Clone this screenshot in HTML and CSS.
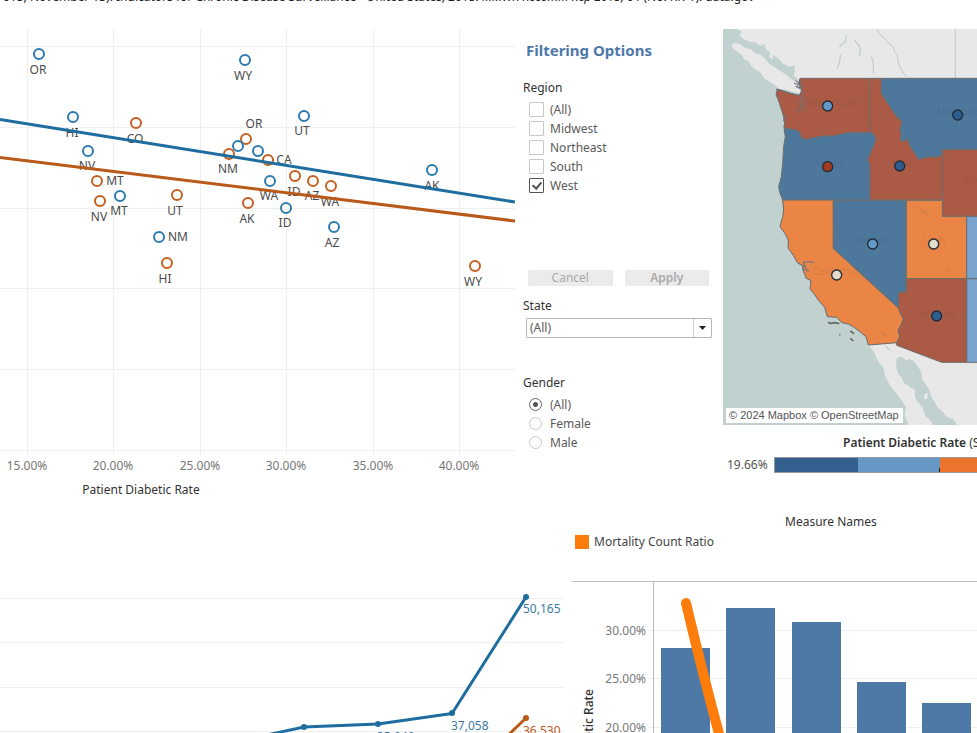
FILE: index.html
```html
<!DOCTYPE html>
<html lang="en">
<head>
<meta charset="utf-8">
<title>Chronic Disease Indicators</title>
<link rel="stylesheet" href="styles.css">
</head>
<body>
<header class="source"><p>015, November 13). Indicators for Chronic Disease Surveillance - United States, 2015. <em>MMWR Recomm Rep 2015; 64</em> (No. RR-1). data.gov</p></header>
<main>
<div class="row row-top">
  <section class="panel">
    <svg class="chart" viewBox="0 29 515 476" role="img" aria-label="Rates by state">
      <path class="grid" d="M27.5 29V455M113.500 29V455M200.500 29V455M286.500 29V455M373.500 29V455M459.500 29V455M0 46.500H515M0 127.500H515M0 208.500H515M0 288.500H515M0 369.500H515M0 450.500H515"/>
      <g class="state-label">
        <text x="38" y="74">OR</text><text x="243" y="80">WY</text><text x="72" y="137">HI</text><text x="135" y="143">CO</text>
        <text x="87" y="170">NV</text><text x="115" y="185">MT</text><text x="99" y="221">NV</text><text x="119" y="215">MT</text>
        <text x="175" y="215">UT</text><text x="178" y="241">NM</text><text x="165" y="283">HI</text><text x="254" y="128">OR</text>
        <text x="228" y="173">NM</text><text x="302" y="135">UT</text><text x="284" y="164">CA</text><text x="269" y="200">WA</text>
        <text x="294" y="196">ID</text><text x="312" y="200">AZ</text><text x="330" y="206">WA</text><text x="247" y="223">AK</text>
        <text x="285" y="227">ID</text><text x="332" y="247">AZ</text><text x="432" y="190">AK</text><text x="473" y="286">WY</text>
      </g>
      <g class="mark mark-orange">
        <circle cx="136" cy="123" r="5"/><circle cx="97" cy="181" r="5"/><circle cx="100" cy="201" r="5"/><circle cx="177" cy="195" r="5"/>
        <circle cx="167" cy="263" r="5"/><circle cx="229" cy="154" r="5"/><circle cx="246" cy="139" r="5"/><circle cx="268" cy="160" r="5"/>
        <circle cx="295" cy="176" r="5"/><circle cx="313" cy="181" r="5"/><circle cx="331" cy="186" r="5"/><circle cx="248" cy="203" r="5"/><circle cx="475" cy="266" r="5"/>
      </g>
      <g class="mark mark-blue">
        <circle cx="39" cy="54" r="5"/><circle cx="245" cy="60" r="5"/><circle cx="73" cy="117" r="5"/><circle cx="88" cy="151" r="5"/>
        <circle cx="120" cy="196" r="5"/><circle cx="159" cy="237" r="5"/><circle cx="238" cy="146" r="5"/><circle cx="258" cy="151" r="5"/>
        <circle cx="304" cy="116" r="5"/><circle cx="270" cy="181" r="5"/><circle cx="286" cy="208" r="5"/><circle cx="334" cy="227" r="5"/><circle cx="432" cy="170" r="5"/>
      </g>
      <path class="trend orange" d="M0 157.500L515 221"/>
      <path class="trend blue" d="M0 119.500L515 202"/>
      <g class="tick middle">
        <text x="27" y="470">15.00%</text><text x="113" y="470">20.00%</text><text x="200" y="470">25.00%</text>
        <text x="286" y="470">30.00%</text><text x="373" y="470">35.00%</text><text x="459" y="470">40.00%</text>
      </g>
      <text class="axis-title middle" x="141" y="494">Patient Diabetic Rate</text>
    </svg>
  </section>

  <form class="filters">
    <h2>Filtering Options</h2>
    <fieldset>
      <legend>Region</legend>
      <label><input type="checkbox">(All)</label>
      <label><input type="checkbox">Midwest</label>
      <label><input type="checkbox">Northeast</label>
      <label><input type="checkbox">South</label>
      <label><input type="checkbox" checked>West</label>
    </fieldset>
    <div class="actions">
      <button type="button" disabled>Cancel</button>
      <button type="button" class="strong" disabled>Apply</button>
    </div>
    <label class="field-label" for="state">State</label>
    <div class="select">
      <select id="state"><option>(All)</option></select>
      <svg viewBox="0 0 18 18" aria-hidden="true"><path class="divider" d="M.5 0V18"/><path d="M6 7H13L9.500 11Z"/></svg>
    </div>
    <fieldset class="gender">
      <legend>Gender</legend>
      <label><input type="radio" name="gender" checked>(All)</label>
      <label><input type="radio" name="gender">Female</label>
      <label><input type="radio" name="gender">Male</label>
    </fieldset>
  </form>

  <section class="panel">
    <div class="map">
      <svg viewBox="9 87 762 1188" preserveAspectRatio="xMinYMin slice" role="img" aria-label="Map of western states">
        <path class="sea" d="M9 87H771V1275H9Z"/>
        <path class="land" d="M52 87L66 96 58 106 72 118 92 126 108 128 122 138 134 132 138 150 150 156 148 172 164 180 178 192 186 206 200 214 214 204 226 212 220 226 232 236 246 262 771 300V87Z"/>
        <path class="land" d="M36 134L46 128 62 134 76 144 92 148 104 158 122 164 136 176 148 192 164 202 182 214 196 222 210 234 224 244 238 256 242 280 222 276 200 270 178 266 160 252 146 244 132 234 120 216 104 208 92 196 84 182 72 178 66 164 52 156 38 144Z"/>
        <path class="sea" d="M158 166L176 176 190 192 210 200 222 196 224 208 206 218 190 212 176 198 160 186Z"/>
        <path class="land" d="M445 1035L530 1028 665 1080H771V1275H712L700 1258 680 1250 668 1236 652 1222 645 1206 634 1190 628 1170 618 1154 606 1138 604 1116 594 1100 580 1082 566 1076 560 1082 544 1070 530 1074 528 1100 534 1122 546 1134 552 1150 570 1160 582 1180 590 1202 608 1222 616 1248 632 1262 640 1275H566L554 1246 558 1222 544 1200 526 1176 510 1158 496 1128 490 1104 474 1084 462 1056Z"/>
        <path class="land" d="M574 1162L586 1170 584 1184 574 1176ZM614 1182L624 1180 622 1198 612 1196Z"/>
        <path class="lake" d="M380 106L376 124 364 134 358 140M404 120L418 138 422 150 418 170M362 164L358 186 352 206M454 168L460 190 460 220M496 1036L510 1052"/>
        <path class="canada" d="M470 88L480 104 494 116 504 130 520 140 524 156 532 164 534 186 542 206 558 230M706 87V234"/>

        <path class="red" d="M240 235H449L450 384 456 397 385 398 340 408 312 408 285 412 255 419 242 410 240 398 228 390 210 386 192 384 194 362 188 340 180 316 175 300 168 284 172 268 190 274 210 280 238 286 246 270 236 250Z"/>
        <path class="blue-fill" d="M192 386L210 387 228 390 240 398 242 410 255 419 285 412 312 408 340 408 385 398 456 397 468 416 460 440 452 460 443 480 450 494V600H188L180 580 176 560 184 530 188 490 191 440 196 410Z"/>
        <path class="red" d="M449 235H484V280L500 305 520 335 530 350 546 364 540 390 544 402 540 420 550 424 562 416 570 438 582 456 596 478 610 474 630 470 650 472 667 464V600H450V494L443 480 452 460 460 440 468 416 456 397 450 384Z"/>
        <path class="blue-fill" d="M484 235H790V449H667V464L650 472 630 470 610 474 596 478 582 456 570 438 562 416 550 424 540 420 544 402 540 390 546 364 530 350 520 335 500 305 484 280Z"/>
        <path class="red" d="M667 449H790V649H667Z"/>
        <path class="orange-fill" d="M188 600H340V745L536 925 542 942 550 956 544 974 534 992 540 1008 532 1028 445 1035 438 1010 420 995 402 982 385 972 366 968 350 952 322 950 314 922 296 902 284 884 270 866 273 842 258 834 250 812 246 796 232 788 220 766 204 744 205 720 196 702 180 680 188 650 191 630Z"/>
        <path class="blue-fill" d="M340 601H559V876H540L535 884 537 925 340 745Z"/>
        <path class="orange-fill" d="M559 601H667V649H740V836H559Z"/>
        <path class="light-fill" d="M740 649H790V836H740ZM740 836H790V1087H740Z"/>
        <path class="red" d="M559 836H740V1087H665L530 1036V1028L540 1008 534 992 544 974 550 956 542 942 536 925 535 884 540 876H559Z"/>

        <path class="coast" d="M168 267L190 272 212 280 234 286M222 250L240 254 238 266 226 258M242 240L248 258 242 268 250 278 246 292 256 302 248 312 254 326 244 334M226 242L238 248 230 260 244 264M238 286L246 296 238 306 246 318 234 334M190 344L197 350 190 360 196 372M194 386L212 384"/>
        <path class="coast" d="M248 788L264 785 284 788M252 784L254 800 262 814M248 796L260 800M258 806L268 816M234 788L248 798 250 812 258 806"/>
        <path class="island" d="M324 968L334 970 344 968 358 971M358 1003L361 1005M391 993L402 1001M391 1015L400 1023"/>
        <path class="terrain" d="M588 614L604 626 618 630 634 654 620 650 602 636ZM634 680L644 686 638 690ZM690 796L684 814 676 820 678 804ZM554 290L560 300 552 304ZM482 990L502 1006 498 1014 486 1004ZM236 310L246 322 236 338 228 330ZM354 684L360 696 356 712ZM380 534L396 534 386 544Z"/>
        <g class="place">
          <text x="334" y="318">Washington</text><text x="323" y="500">Oregon</text><text x="540" y="500">Idaho</text><text x="714" y="344">Montana</text>
          <text x="728" y="551" class="start">Wyoming</text><text x="462" y="733">Nevada</text><text x="642" y="733">Utah</text><text x="346" y="825">California</text><text x="652" y="950">Arizona</text>
        </g>
        <g class="pins">
          <circle class="p-light" cx="323" cy="318" r="15"/><circle class="p-red" cx="323" cy="500" r="15"/><circle class="p-dark" cx="539" cy="498" r="15"/>
          <circle class="p-dark" cx="713" cy="345" r="15"/><circle class="p-light" cx="458" cy="732" r="15"/><circle class="p-cream" cx="641" cy="732" r="15"/>
          <circle class="p-cream" cx="350" cy="825" r="15"/><circle class="p-dark" cx="650" cy="948" r="15"/>
        </g>
      </svg>
      <p class="credit">© 2024 Mapbox © OpenStreetMap</p>
    </div>
    <p class="scale-title"><b>Patient Diabetic Rate</b> (S</p>
    <div class="scale"><span>19.66%</span>
      <div class="ramp"><i class="r1"></i><i class="r2"></i><i class="r3"></i></div>
    </div>
  </section>
</div>

<div class="row row-bottom">
  <section class="panel trend-panel">
    <svg class="chart" viewBox="0 580 565 153" role="img" aria-label="Count trend">
      <path class="grid" d="M0 598.500H564M0 642.500H564M0 687.500H564M0 731.500H564"/>
      <path class="trend blue" d="M240 739.500L267 735 304 727 378 724 452 713.500 526 597"/>
      <path class="trend orange" d="M500 743L526 718"/>
      <g class="dot-blue"><circle cx="304" cy="727" r="3"/><circle cx="378" cy="724" r="3"/><circle cx="452" cy="713" r="3"/><circle cx="526" cy="597" r="3"/></g>
      <circle class="dot-orange" cx="526" cy="718" r="3"/>
      <g class="value"><text x="523" y="613">50,165</text><text x="451" y="730">37,058</text><text x="377" y="741">35,940</text></g>
      <text class="value value-orange" x="523" y="735">36,530</text>
    </svg>
  </section>
  <section class="panel measures">
    <h3>Measure Names</h3>
    <p class="key"><i></i>Mortality Count Ratio</p>
    <svg class="chart" viewBox="572 581 405 152" role="img" aria-label="Diabetic rate bars">
      <path class="grid" d="M648 630.500H977M648 678.500H977M648 727.500H977"/>
      <path class="bar" d="M661 648H710V740H661ZM726 608H775V740H726ZM792 622H841V740H792ZM857 682H906V740H857ZM922 703H971V740H922Z"/>
      <path class="frame" d="M572 581.500H977M653.500 581V733"/>
      <path class="ratio" d="M686 603Q702 671 722 745"/>
      <g class="tick end"><text x="646" y="635">30.00%</text><text x="646" y="683">25.00%</text><text x="646" y="732">20.00%</text></g>
      <text class="axis-title rotated end" transform="translate(593 689) rotate(-90)">Patient Diabetic Rate</text>
    </svg>
  </section>
</div>
</main>
</body>
</html>
```
FILE: styles.css
```css
* { box-sizing: border-box; }
body { margin: 0; background: #fff; color: #333; font: 12px/18px "Noto Sans", "Open Sans", sans-serif; overflow: hidden; }
h2, h3, p, fieldset, legend { margin: 0; padding: 0; border: 0; font-size: 12px; font-weight: 400; }

.source { display: flex; justify-content: flex-end; align-items: flex-end; width: 77.2%; height: 6px; margin-bottom: 23px; overflow: hidden; }
.source p { flex: none; white-space: nowrap; color: #222; }

.row { display: grid; }
.row-top { grid-template-columns: minmax(0, 515fr) 208px minmax(0, 254fr); height: 476px; }
.row-bottom { grid-template-columns: minmax(0, 565fr) minmax(0, 412fr); }
.panel { overflow: hidden; }
.chart { display: block; width: 100%; height: auto; }

/* Chart marks */
.grid { stroke: #efefef; fill: none; }
.state-label text { font-size: 12px; fill: #4a4a4a; text-anchor: middle; }
.mark circle { fill: #fff; fill-opacity: .6; stroke-width: 2; }
.mark-orange { stroke: #c4601f; }
.mark-blue { stroke: #2b7bb0; }
.trend { fill: none; stroke-width: 3; stroke-linejoin: round; }
.blue { stroke: #1f6d9e; }
.orange { stroke: #b9591a; }
.tick { font-size: 12px; fill: #777; }
.middle { text-anchor: middle; }
.end { text-anchor: end; }
.axis-title { font-size: 12px; fill: #333; }
.rotated { font-weight: 500; }
.dot-blue { fill: #1f6d9e; }
.dot-orange { fill: #b9591a; }
.value { font-size: 12px; fill: #3b7ba6; }
.value-orange { fill: #b9591a; }
.bar { fill: #4e79a7; }
.frame { stroke: #bdbdbd; fill: none; }
.ratio { stroke: #fc7d0b; stroke-width: 10; stroke-linecap: round; fill: none; }

/* Filters */
.filters { padding: 11px 12px 0 8px; }
.filters h2 { padding-left: 3px; font-size: 15px; line-height: 20px; font-weight: 700; color: #4e79a7; margin-bottom: 19px; }
.filters legend { margin-bottom: 3px; }
.filters fieldset label { display: flex; align-items: center; gap: 6px; height: 19px; padding-left: 6px; color: #5a5a5a; }
.filters input { appearance: none; flex: none; margin: 0; width: 15px; height: 15px; border: 1px solid #c8c8c8; border-radius: 1px; background: #fff; }
.filters input[type="checkbox"]:checked { border-color: #555; display: grid; place-items: center; }
.filters input[type="checkbox"]:checked::before { content: ""; width: 4px; height: 7px; border: solid #555; border-width: 0 2px 2px 0; transform: rotate(40deg); margin-bottom: 2px; }
.filters input[type="radio"] { width: 13px; height: 13px; border-radius: 50%; margin-right: 2px; }
.filters input[type="radio"]:checked { border-color: #666; background: radial-gradient(#555 0 2px, #fff 3px); }
.actions { display: flex; gap: 12px; margin: 75px 2px 11px 5px; }
.actions button { flex: 1; height: 16px; padding: 0; border: 0; border-radius: 1px; background: #ebebeb; color: #aaa; font: 12px/16px "Noto Sans", sans-serif; }
.actions .strong { font-weight: 600; }
.field-label { display: block; margin-bottom: 3px; }
.select { display: grid; margin: 0 -1px 36px 3px; }
.select select { grid-area: 1 / 1; appearance: none; height: 20px; padding: 0 3px; border: 1px solid #b5b5b5; border-radius: 1px; background: #fff; color: #5a5a5a; font: 12px/18px "Noto Sans", sans-serif; }
.select svg { grid-area: 1 / 1; justify-self: end; align-self: center; width: 18px; height: 18px; margin-right: 1px; fill: #222; pointer-events: none; }
.divider { stroke: #d0d0d0; }

/* Map */
.map { position: relative; height: 396px; }
.map svg { display: block; width: 100%; height: 100%; }
.sea { fill: #c1d1d0; }
.land { fill: #e8e8e8; }
.lake { fill: none; stroke: #c1cfcf; stroke-width: 4; }
.canada { fill: none; stroke: #b5b5b5; stroke-width: 2; }
.red, .blue-fill, .orange-fill, .light-fill { stroke: #6b6b6b; stroke-width: 3; stroke-linejoin: round; }
.red { fill: #ab5b45; }
.blue-fill { fill: #4e779c; }
.orange-fill { fill: #ea8545; }
.light-fill { fill: #78a3cc; }
.coast { fill: none; stroke: #6b747a; stroke-width: 3; }
.island { fill: none; stroke: #626b62; stroke-width: 5; }
.terrain { fill: #555; fill-opacity: .1; }
.place text { font-size: 30px; fill: #333; fill-opacity: .12; text-anchor: middle; }
.place .start { text-anchor: start; }
.pins circle { stroke: #222a33; stroke-width: 4; }
.p-light { fill: #6299c8; }
.p-dark { fill: #2c5d91; }
.p-red { fill: #a33b21; }
.p-cream { fill: #e2dccb; }
.credit { position: absolute; left: 3px; bottom: 2px; padding: 0 4px 0 3px; background: #fff; color: #555; font: 11px/15px "Liberation Sans", sans-serif; white-space: nowrap; }
.scale-title { margin: 9px 0 5px 120px; white-space: nowrap; }
.scale-title b { font-weight: 600; }
.scale { display: flex; align-items: center; gap: 6px; height: 16px; padding-left: 4px; color: #555; }
.ramp { flex: 1; display: grid; grid-template-columns: 83fr 82fr 37fr; height: 16px; border: 1px solid #999; border-right: 0; }
.r1 { background: #33608f; }
.r2 { background: linear-gradient(#222, #222) right bottom / 1px 4px no-repeat #6798c5; }
.r3 { background: #eb732b; }

/* Bottom row */
.trend-panel { padding-top: 75px; }
.measures { padding: 8px 0 0 7px; }
.measures h3 { padding-left: 213px; white-space: nowrap; }
.key { display: flex; align-items: center; gap: 5px; padding-left: 3px; margin: 2px 0 30px; color: #444; }
.key i { width: 14px; height: 14px; background: #fc7d0b; }
```
